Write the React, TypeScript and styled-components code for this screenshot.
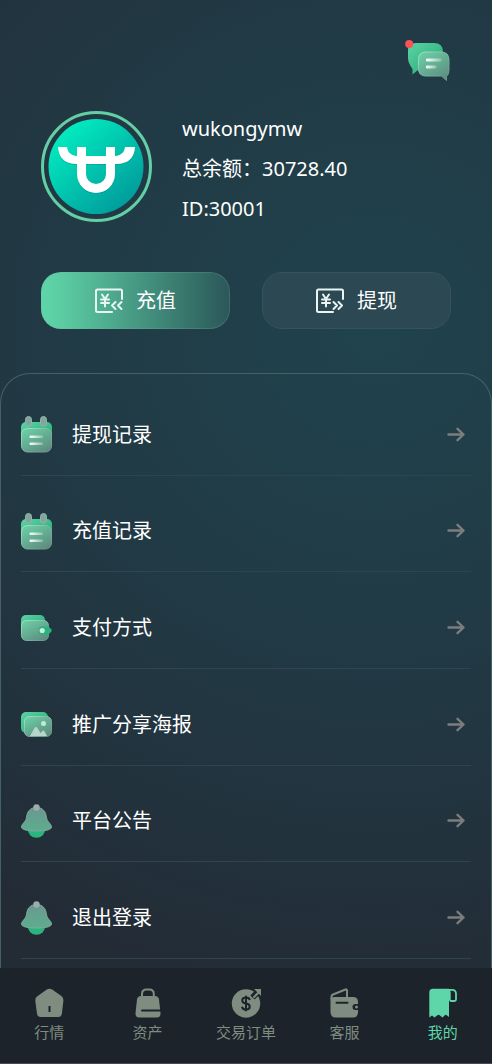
import React from "react";
import styled, { createGlobalStyle } from "styled-components";

const GlobalStyle = createGlobalStyle`
  *, *::before, *::after { box-sizing: border-box; }
  body {
    margin: 0;
    background: #232b35;
    color: #fff;
    font-family: "Noto Sans", "Noto Sans CJK SC", sans-serif;
  }
  button { font: inherit; color: inherit; cursor: pointer; }
  a { color: inherit; text-decoration: none; }
  svg { display: block; flex: none; }
`;

const Page = styled.div`
  height: 100vh;
  display: flex;
  flex-direction: column;
  overflow: hidden;
  background: radial-gradient(
    ellipse 760px 740px at 76% 31%,
    #20434d 0%,
    #213a45 42%,
    #22323d 70%,
    #232b35 92%
  );
`;

const Header = styled.header`
  display: flex;
  justify-content: flex-end;
  padding: 38px 41px 0;
`;

const MessageButton = styled.button`
  display: block;
  padding: 0;
  border: 0;
  background: none;
`;

const Profile = styled.section`
  display: flex;
  align-items: flex-start;
  gap: 30px;
  padding: 27px 41px 0;
`;

const AvatarRing = styled.div`
  width: 111px;
  height: 111px;
  margin-top: 2px;
  padding: 4px;
  border: 3px solid #62cfa6;
  border-radius: 50%;
`;

const Info = styled.div`
  display: flex;
  flex-direction: column;
  font-size: 20px;
  line-height: 40px;
`;

const InfoLine = styled.span`
  white-space: nowrap;
`;

const Actions = styled.div`
  display: flex;
  gap: 32px;
  padding: 43px 41px 0;
`;

const ActionButton = styled.button<{ $primary?: boolean }>`
  flex: 1;
  display: flex;
  align-items: center;
  justify-content: center;
  gap: 13px;
  height: 57px;
  padding: 0;
  border: 1px solid ${(p) => (p.$primary ? "rgba(120, 170, 165, 0.25)" : "#36525b")};
  border-radius: 20px;
  background: ${(p) =>
    p.$primary ? "linear-gradient(90deg, #5ed6a9 0%, #5bcba2 12%, #2b5759 100%)" : "#2b4853"};
  background-origin: border-box;
  font-size: 20px;
  line-height: 28px;
`;

const Panel = styled.main`
  flex: 1;
  min-height: 0;
  overflow: hidden;
  margin-top: 44px;
  padding: 5px 20px 0;
  border: 1px solid #466068;
  border-bottom: 0;
  border-radius: 30px 30px 0 0;
`;

const Menu = styled.nav`
  display: grid;
  grid-template-rows: repeat(6, 1fr);
  height: 580px;
`;

const MenuRow = styled.a`
  display: flex;
  align-items: center;
  padding: 16px 5px 0 0;
  border-bottom: 1px solid #30444e;
  font-size: 20px;
  line-height: 28px;
`;

const RowLabel = styled.span`
  flex: 1;
  margin-left: 20px;
`;

const TabBar = styled.nav`
  flex: none;
  display: flex;
  height: 96px;
  padding-top: 20px;
  border-bottom: 1px solid #4b4652;
  background: #1c232a;
`;

const Tab = styled.a<{ $active?: boolean }>`
  && { color: ${(p) => (p.$active ? "#5fd6aa" : "#7f8c80")}; }
  flex: 1;
  display: flex;
  flex-direction: column;
  align-items: center;
  gap: 4px;
  font-size: 15px;
  line-height: 20px;
`;

const SharedDefs = styled.svg`
  position: absolute;
`;

const Gradients = () => (
  <SharedDefs width="0" height="0" aria-hidden="true">
    <defs>
      <linearGradient id="back" x1="0" y1="0" x2="1" y2="1">
        <stop offset="0" stopColor="#5cd3a5" />
        <stop offset="1" stopColor="#22a870" />
      </linearGradient>
      <linearGradient id="glass" x1="0.1" y1="0" x2="0.8" y2="1">
        <stop offset="0" stopColor="#6bd0a6" />
        <stop offset="1" stopColor="#5e8c80" />
      </linearGradient>
      <linearGradient id="rim" x1="0" y1="0" x2="1" y2="1">
        <stop offset="0" stopColor="#a5e6cb" />
        <stop offset="0.5" stopColor="#7fb5a2" />
        <stop offset="1" stopColor="#6c9187" />
      </linearGradient>
      <linearGradient id="line" x1="0" y1="0" x2="1" y2="0">
        <stop offset="0" stopColor="#ffffff" />
        <stop offset="1" stopColor="#ffffff" stopOpacity="0.25" />
      </linearGradient>
      <linearGradient id="bell" x1="0.5" y1="0" x2="0.5" y2="1">
        <stop offset="0" stopColor="#6c9790" />
        <stop offset="1" stopColor="#5cae8e" />
      </linearGradient>
      <linearGradient id="logo" x1="0.15" y1="0.1" x2="0.85" y2="0.9">
        <stop offset="0" stopColor="#02edc0" />
        <stop offset="1" stopColor="#009b9b" />
      </linearGradient>
    </defs>
  </SharedDefs>
);

const MessageIcon = () => (
  <svg width="46" height="44" viewBox="0 0 46 44" aria-hidden="true">
    <path d="M11 5h18q9 0 9 9v12q0 6-6 6H13l-5.500 4.500V31Q3 25 3 20V13q0-8 8-8Z" fill="url(#back)" />
    <path
      d="M21 14h15q8 0 8 8v10q0 4.500-2.500 6.500v4l-5-4.500H21q-7.500 0-7.500-7.500V21.500q0-7.500 7.500-7.500Z"
      fill="url(#glass)" stroke="url(#rim)"
    />
    <rect x="21" y="20.500" width="15.500" height="3" rx="1" fill="url(#line)" />
    <rect x="21" y="27.500" width="10.500" height="3" rx="1" fill="url(#line)" />
    <circle cx="4.200" cy="6" r="4" fill="#fb5454" />
  </svg>
);

const bullPath =
  "M10 29h9q1 8 9 9h1v-9h9v9h20v-9h9v9h1q8-1 9-9h10q-1 16-17 17h-3v10a19 19 0 0 1-38 0V46h-2q-16-1-17-17ZM38 46v10a10 10 0 0 0 20 0V46Z";

const BullLogo = () => (
  <svg width="97" height="97" viewBox="0 0 97 97" role="img" aria-label="头像">
    <circle cx="48" cy="48.500" r="47.500" fill="url(#logo)" />
    <path d={bullPath} fillRule="evenodd" fill="#087f83" opacity="0.350" transform="translate(0 1)" />
    <path d={bullPath} fillRule="evenodd" fill="#fff" />
  </svg>
);

const YuanIcon = ({ out }: { out?: boolean }) => (
  <svg
    width="28" height="26" viewBox="0 0 28 26" fill="none" stroke="#e9f5f2"
    strokeWidth="2" strokeLinecap="round" strokeLinejoin="round" aria-hidden="true"
  >
    <path d="M27 11V3q0-1.500-1.500-1.500h-23Q1 1.500 1 3v19.500Q1 24 2.500 24H17" />
    <path d="m7 6.500 3 4.500 3-4.500M6 11.500h8M6 15h8M10 11v7.500" />
    {out ? <path d="m17.500 14 3.500 3.500-3.500 3.500m5-7 3.500 3.500-3.500 3.500" /> : <path d="m20.500 14-3.500 3.500 3.500 3.500m6-7-3.500 3.500 3.500 3.500" />}
  </svg>
);

const CalendarIcon = () => (
  <svg width="31" height="37" viewBox="0 0 31 37" aria-hidden="true">
    <rect x="0" y="6" width="31" height="25" rx="5" fill="url(#back)" />
    <rect x="0.500" y="12.500" width="30" height="23.500" rx="6" fill="url(#glass)" stroke="url(#rim)" />
    <rect x="4.500" y="0.500" width="6" height="9.500" rx="3" fill="#7fa79c" stroke="#94b3ab" />
    <rect x="19.500" y="0.500" width="6" height="9.500" rx="3" fill="#7fa79c" stroke="#94b3ab" />
    <rect x="8.500" y="19.500" width="13.500" height="2.500" rx="1" fill="url(#line)" />
    <rect x="8.500" y="26.500" width="13.500" height="2.500" rx="1" fill="url(#line)" />
  </svg>
);

const WalletIcon = () => (
  <svg width="31" height="26" viewBox="0 0 31 26" aria-hidden="true">
    <rect x="0" y="0" width="24" height="20" rx="5" fill="url(#back)" />
    <rect x="0.500" y="5.500" width="27" height="20" rx="5" fill="url(#glass)" stroke="url(#rim)" />
    <path d="M21.500 11.500h6l3 3v2l-3 3h-6a4 4 0 0 1 0-8Z" fill="#2bb17c" />
    <circle cx="21.200" cy="15.500" r="2.600" fill="#c3efdf" />
  </svg>
);

const PictureIcon = () => (
  <svg width="31" height="25" viewBox="0 0 31 25" aria-hidden="true">
    <rect x="0" y="0" width="27" height="21" rx="5" fill="url(#back)" />
    <rect x="3.500" y="4.500" width="27" height="20" rx="5" fill="url(#glass)" stroke="url(#rim)" />
    <path d="M9 24l4.500-8q1.500-2 3 0l3 5 2-2q1-1 2 .3L26 24Z" fill="#b7d5cb" />
    <circle cx="22.500" cy="11.500" r="2.500" fill="#c4e7da" />
  </svg>
);

const BellIcon = () => (
  <svg width="31" height="34" viewBox="0 0 31 34" aria-hidden="true">
    <circle cx="15.500" cy="25" r="8.800" fill="#2bb47d" />
    <path
      d="M15.500 3.500C9 3.500 6 8 5.700 13 5.400 18 .5 19.500.5 23c0 2.500 5 4 15 4s15-1.500 15-4c0-3.500-4.900-5-5.200-10C25 8 22 3.500 15.500 3.500Z"
      fill="url(#bell)" stroke="#82a8a0"
    />
    <circle cx="15.500" cy="3.500" r="3.200" fill="#9baeac" />
  </svg>
);

const ArrowIcon = () => (
  <svg
    width="19" height="16" viewBox="0 0 19 16" fill="none" stroke="#7c7d7d"
    strokeWidth="2.400" strokeLinecap="round" strokeLinejoin="round" aria-hidden="true"
  >
    <path d="M1.500 7.500h15M10.500 1.800l6 5.700-6 5.700" />
  </svg>
);

const TabSvg = ({ children }: { children: React.ReactNode }) => (
  <svg width="30" height="30" viewBox="0 0 30 30" fill="currentColor" aria-hidden="true">
    {children}
  </svg>
);

const HomeTab = () => (
  <TabSvg>
    <path d="M12.800 1.500q2.700-1.500 5.400 0l9.500 6.800q2 1.600 1.700 4.500l-1.500 12.700Q27.500 29 24 29H7q-3.500 0-4-3.300L1.300 12.800Q1 10 3 8.500Z" />
    <path d="M15.500 18v6" stroke="#1c232a" strokeWidth="2" />
  </TabSvg>
);

const BagTab = () => (
  <TabSvg>
    <path d="M9 11V6q0-4.500 4.500-4.500h2.800q4.500 0 4.500 4.500v5" fill="none" stroke="currentColor" strokeWidth="2" />
    <path d="M8 8h14q3.500 0 4 3.500l1.500 13.500q.3 4.500-4 4.500h-17q-4.300 0-4-4.500L4 11.500Q4.500 8 8 8Z" />
    <path d="M9 22.500h19" stroke="#1c232a" strokeWidth="2" strokeLinecap="round" />
  </TabSvg>
);

const CoinTab = () => (
  <TabSvg>
    <circle cx="15" cy="15.500" r="14.200" />
    <path d="m21.500 9.500 8-8" stroke="#1c232a" strokeWidth="6" />
    <path d="M21 1h9.500v9.500L27 7.500 23.500 11 20.500 8 24 4.500Z" fill="#1c232a" />
    <path d="M23 1h7v7l-2.200-2.200-4.600 4.600-1.500-1.500 4.600-4.600Z" />
    <path d="M18.800 12q-.5-2.500-3.800-2.500c-5 0-5 5.500 0 6s5 6 0 6q-3.500 0-4-2.800M15 7.800v15.400" fill="none" stroke="#1c232a" strokeWidth="2" />
  </TabSvg>
);

const ServiceTab = () => (
  <TabSvg>
    <path d="M2.500 11V8.500Q2.500 7 4 6.500l12.500-5Q18 1 18 2.500V9" fill="none" stroke="currentColor" strokeWidth="2" />
    <path d="M6 9h18q5 0 5 5v2h-2.500a3 3 0 0 0 0 6H29v2q0 5.500-5 5.500H7q-5.500 0-5.500-5.500V10Q4 9 6 9Z" />
    <path d="M7.500 14.800h11" stroke="#1c232a" strokeWidth="2" strokeLinecap="round" />
    <circle cx="27.500" cy="19" r="1.500" />
  </TabSvg>
);

const MineTab = () => (
  <TabSvg>
    <path d="M5 .8h16v28.200l-2-1.500q-1.200-1.500-2.500 0l-2 2-2.500-2q-1.500-1.300-3 0L6.500 29.500 4 27.500 1.300 29.500V4.500Q1.300.8 5 .8Z" />
    <path d="M19 1.800h5q4 0 4 4v5.700q0 1.500-1.500 1.500h-3.500q-1.200 0-1.200-1.500V4.500q0-2-1.500-2.700" fill="none" stroke="currentColor" strokeWidth="1.800" />
  </TabSvg>
);

const menu = [
  { label: "提现记录", icon: <CalendarIcon /> },
  { label: "充值记录", icon: <CalendarIcon /> },
  { label: "支付方式", icon: <WalletIcon /> },
  { label: "推广分享海报", icon: <PictureIcon /> },
  { label: "平台公告", icon: <BellIcon /> },
  { label: "退出登录", icon: <BellIcon /> },
];

const tabs = [
  { label: "行情", icon: <HomeTab /> },
  { label: "资产", icon: <BagTab /> },
  { label: "交易订单", icon: <CoinTab /> },
  { label: "客服", icon: <ServiceTab /> },
  { label: "我的", icon: <MineTab />, active: true },
];

export default function App() {
  return (
    <>
      <GlobalStyle />
      <Page>
        <Gradients />
        <Header>
          <MessageButton aria-label="消息">
            <MessageIcon />
          </MessageButton>
        </Header>
        <Profile>
          <AvatarRing>
            <BullLogo />
          </AvatarRing>
          <Info>
            <InfoLine>wukongymw</InfoLine>
            <InfoLine>总余额：30728.40</InfoLine>
            <InfoLine>ID:30001</InfoLine>
          </Info>
        </Profile>
        <Actions>
          <ActionButton $primary>
            <YuanIcon />
            充值
          </ActionButton>
          <ActionButton>
            <YuanIcon out />
            提现
          </ActionButton>
        </Actions>
        <Panel>
          <Menu>
            {menu.map((item) => (
              <MenuRow href="#" key={item.label}>
                {item.icon}
                <RowLabel>{item.label}</RowLabel>
                <ArrowIcon />
              </MenuRow>
            ))}
          </Menu>
        </Panel>
        <TabBar>
          {tabs.map((tab) => (
            <Tab href="#" key={tab.label} $active={tab.active}>
              {tab.icon}
              {tab.label}
            </Tab>
          ))}
        </TabBar>
      </Page>
    </>
  );
}
